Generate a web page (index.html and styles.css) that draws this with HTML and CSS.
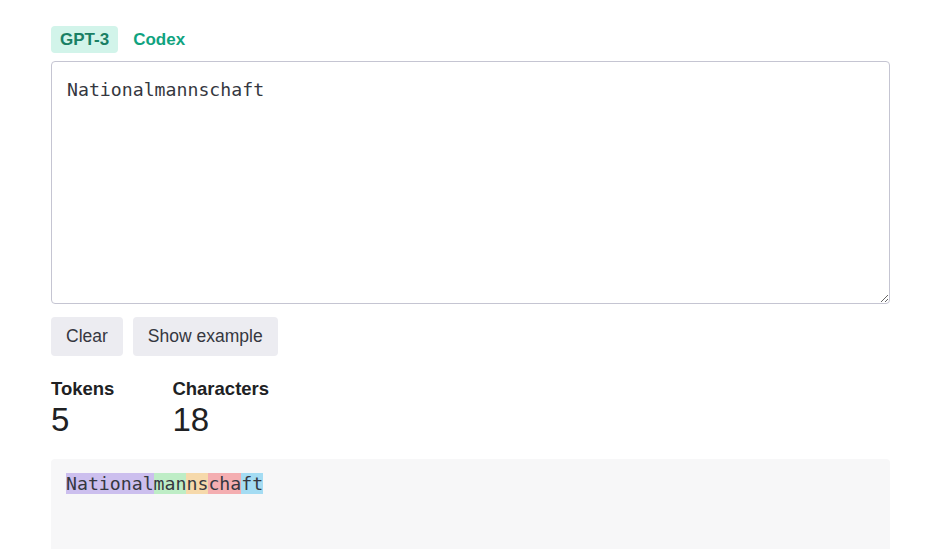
FILE: index.html
```html
<!DOCTYPE html>
<html lang="en">
<head>
    <meta charset="UTF-8">
    <meta name="viewport" content="width=device-width, initial-scale=1.0">
    <title>Tokenizer</title>
    <link rel="stylesheet" href="styles.css">
</head>
<body>
    <div class="container">
        <div class="tabs">
            <span class="tab active">GPT-3</span>
            <span class="tab">Codex</span>
        </div>
        <textarea class="input" spellcheck="false">Nationalmannschaft</textarea>
        <div class="actions">
            <button class="btn">Clear</button>
            <button class="btn">Show example</button>
        </div>
        <div class="stats">
            <div class="stat">
                <div class="label">Tokens</div>
                <div class="value">5</div>
            </div>
            <div class="stat">
                <div class="label">Characters</div>
                <div class="value">18</div>
            </div>
        </div>
        <div class="tokens"><span class="t0">National</span><span class="t1">man</span><span class="t2">ns</span><span class="t3">cha</span><span class="t4">ft</span></div>
    </div>
</body>
</html>
```
FILE: styles.css
```css
*{
    margin: 0;
    padding: 0;
    box-sizing: border-box;
}
body{
    background: #fff;
    font-family: "Liberation Sans", Arial, sans-serif;
    color: #202123;
}
.container{
    width: 839px;
    margin-left: 51px;
    padding-top: 26px;
    display: flex;
    flex-direction: column;
}
.tabs{
    display: flex;
    height: 27px;
}
.tab{
    padding: 0 9px;
    line-height: 27px;
    font-size: 17px;
    font-weight: bold;
    color: #10a37f;
    border-radius: 4px;
    margin-right: 6px;
}
.tab.active{
    background: #d2f4ea;
    color: #1a7f64;
}
.input{
    margin-top: 8px;
    height: 243px;
    width: 100%;
    border: 1px solid #c5c5d2;
    border-radius: 4px;
    padding: 16px 15px;
    font-family: "DejaVu Sans Mono", "Liberation Mono", monospace;
    font-size: 18.2px;
    line-height: 24px;
    color: #353740;
    resize: vertical;
    outline: none;
}
.actions{
    display: flex;
    gap: 10px;
    margin-top: 13px;
}
.btn{
    height: 39px;
    padding: 0 15px;
    border: none;
    border-radius: 4px;
    background: #ececf1;
    color: #353740;
    font-family: "Liberation Sans", Arial, sans-serif;
    font-size: 17.5px;
}
.stats{
    display: flex;
    gap: 58px;
    margin-top: 22px;
}
.label{
    font-size: 18.5px;
    font-weight: bold;
    line-height: 22px;
}
.value{
    font-size: 33px;
    line-height: 40px;
    color: #202123;
}
.tokens{
    margin-top: 19px;
    height: 100px;
    background: #f7f7f8;
    border-radius: 4px 4px 0 0;
    padding: 14px 15px;
    font-family: "DejaVu Sans Mono", "Liberation Mono", monospace;
    font-size: 18.2px;
    line-height: 22px;
    color: #353740;
}
.t0{ background: rgba(107, 64, 216, .3); }
.t1{ background: rgba(104, 222, 122, .4); }
.t2{ background: rgba(244, 172, 54, .4); }
.t3{ background: rgba(239, 65, 70, .4); }
.t4{ background: rgba(39, 181, 234, .4); }
```
